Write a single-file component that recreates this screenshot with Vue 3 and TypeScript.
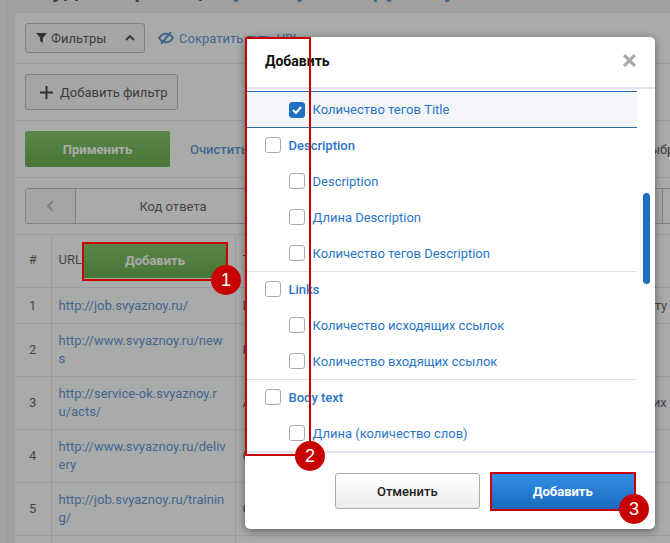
<script setup lang="ts">
interface Row { n: number; url: string; text: string }
interface Item { label: string; checked?: boolean }
interface Group { title: string; items: Item[] }

const rows: Row[] = [
  { n: 1, url: 'http://job.svyaznoy.ru/', text: 'Вакансии в компании Связной – найдите интересную для вас работу' },
  { n: 2, url: 'http://www.svyaznoy.ru/news', text: 'Новости компании Связной' },
  { n: 3, url: 'http://service-ok.svyaznoy.ru/acts/', text: 'Акции сервисных центров Связной для постоянных клиентов, — и их экспертов' },
  { n: 4, url: 'http://www.svyaznoy.ru/delivery', text: 'Способы доставки' },
  { n: 5, url: 'http://job.svyaznoy.ru/training/', text: 'Сотрудникам и обучение' }
]

const groups: Group[] = [
  { title: 'Description', items: [{ label: 'Description' }, { label: 'Длина Description' }, { label: 'Количество тегов Description' }] },
  { title: 'Links', items: [{ label: 'Количество исходящих ссылок' }, { label: 'Количество входящих ссылок' }] },
  { title: 'Body text', items: [{ label: 'Длина (количество слов)' }] }
]
</script>

<template>
  <div class="page">
    <aside class="rail"></aside>
    <main class="content">
      <h1 class="heading">Аудит страниц <a class="heading-link">svyaznoy.ru – группа у</a></h1>
      <section class="card">
        <div class="section">
          <button class="btn filter-btn">
            <svg class="i-funnel" viewBox="0 0 12 11"><path d="M0 0h12L7.500 5.200V11L4.500 9V5.200z" /></svg>
            <span>Фильтры</span>
            <svg class="i-chev" viewBox="0 0 10 6"><path d="M1 5l4-4 4 4" /></svg>
          </button>
          <a class="link short">
            <svg class="i-eye" viewBox="0 0 16 12"><path d="M1 6c2-3 4.200-4.300 7-4.300S13 3 15 6c-2 3-4.200 4.300-7 4.300S3 9 1 6z" /><path d="M13 0L3 12" /></svg>
            Сократить путь URL
          </a>
        </div>
        <div class="section">
          <button class="btn add-filter">
            <svg class="i-plus" viewBox="0 0 13 13"><path d="M6.500 0v13M0 6.500h13" /></svg>
            Добавить фильтр
          </button>
        </div>
        <div class="section">
          <button class="apply">Применить</button>
          <a class="link clear">Очистить</a>
          <span class="pick">Выбрать</span>
        </div>
        <div class="section">
          <div class="tabs">
            <div class="tab prev">
              <svg class="i-left" viewBox="0 0 7 12"><path d="M6 1L1 6l5 5" /></svg>
            </div>
            <div class="tab code">Код ответа</div>
            <div class="tab wide">Контент</div>
            <div class="tab rest"></div>
          </div>
        </div>
        <table class="table">
          <thead>
            <tr>
              <th class="c-n">#</th>
              <th class="c-url">
                <div class="url-head"><span>URL</span><button class="add-col">Добавить</button></div>
              </th>
              <th class="c-text">Title</th>
            </tr>
          </thead>
          <tbody>
            <tr v-for="r in rows" :key="r.n">
              <td class="c-n">{{ r.n }}</td>
              <td class="c-url"><a class="link">{{ r.url }}</a></td>
              <td class="c-text">{{ r.text }}</td>
            </tr>
            <tr><td class="c-n">6</td><td class="c-url"></td><td class="c-text"></td></tr>
          </tbody>
        </table>
      </section>
    </main>

    <div class="overlay"></div>

    <div class="modal">
      <header class="modal-head">
        <span class="modal-title">Добавить</span>
        <svg class="i-close" viewBox="0 0 12 12"><path d="M1 1l10 10M11 1L1 11" /></svg>
      </header>
      <div class="modal-body">
        <div class="rows">
          <label class="row child selected">
            <span class="box on">
              <svg viewBox="0 0 10 8"><path d="M1 4l3 3 5-6" /></svg>
            </span>
            <span class="label">Количество тегов Title</span>
          </label>
          <div v-for="g in groups" :key="g.title" class="group">
            <label class="row">
              <span class="box"></span>
              <span class="label strong">{{ g.title }}</span>
            </label>
            <label v-for="it in g.items" :key="it.label" class="row child">
              <span class="box"></span>
              <span class="label">{{ it.label }}</span>
            </label>
          </div>
        </div>
        <div class="scroll-thumb"></div>
      </div>
      <footer class="modal-foot">
        <button class="btn-cancel">Отменить</button>
        <button class="btn-add">Добавить</button>
      </footer>
    </div>

    <div class="frame f1"></div>
    <div class="frame f2"></div>
    <div class="frame f3"></div>
    <div class="dot d1">1</div>
    <div class="dot d2">2</div>
    <div class="dot d3">3</div>
  </div>
</template>

<style>
html, body { margin: 0; }
</style>

<style scoped>
.page {
  position: relative;
  display: flex;
  width: 670px;
  height: 543px;
  overflow: hidden;
  background: #ebebeb;
  font-family: Roboto, "Liberation Sans", sans-serif;
  font-size: 13px;
  color: #222;
}
.rail { flex: 0 0 5px; background: #f2f2f2; }
.content { flex: 0 0 auto; margin-left: 10px; width: 700px; }
.heading {
  margin: -25px 0 9px 22px;
  height: 29px;
  font-size: 24px;
  line-height: 29px;
  font-weight: 500;
  white-space: nowrap;
  color: #222;
}
.heading-link { color: #2a76c6; }
.card { background: #fdffff; }
.section {
  display: flex;
  align-items: center;
  padding: 10px;
  border-bottom: 1px solid #e0e3f0;
}
.link { color: #2a76c6; }
button { font-family: inherit; font-size: 13px; }
.btn {
  display: flex;
  align-items: center;
  background: #f4f4f4;
  border: 1px solid #ababab;
  border-radius: 3px;
  color: #222;
  padding: 0;
  box-sizing: border-box;
}
.filter-btn { width: 120px; height: 30px; padding-left: 10px; }
.i-funnel { width: 11px; height: 10px; fill: #111; margin-right: 4px; }
.i-chev { width: 10px; height: 6px; margin-left: auto; margin-right: 9px; fill: none; stroke: #111; stroke-width: 1.800; }
.short { display: flex; align-items: center; margin-left: 13px; white-space: nowrap; }
.i-eye { width: 16px; height: 12px; margin-right: 5px; fill: none; stroke: #2a76c6; stroke-width: 2; }
.add-filter { width: 153px; height: 36px; padding-left: 14px; }
.i-plus { width: 13px; height: 13px; fill: none; stroke: #111; stroke-width: 2; margin-right: 7px; }
.apply {
  width: 145px;
  height: 36px;
  border: none;
  border-radius: 2px;
  background: linear-gradient(#5db83c, #3a9616);
  color: #fff;
  font-weight: 700;
}
.clear { margin-left: 20px; font-weight: 500; }
.pick { margin-left: 394px; font-weight: 400; }
.tabs {
  display: flex;
  height: 36px;
  box-sizing: border-box;
  border: 1px solid #ababab;
  border-radius: 3px;
}
.tab { display: flex; align-items: center; justify-content: center; border-right: 1px solid #ababab; box-sizing: border-box; color: #333; }
.prev { width: 50px; background: #f4f4f4; }
.code { width: 195px; }
.wide { width: 392px; }
.rest { width: 30px; }
.i-left { width: 7px; height: 12px; fill: none; stroke: #aaa; stroke-width: 2; }
.table { border-collapse: collapse; table-layout: fixed; width: 685px; }
.table th, .table td {
  border-bottom: 1px solid #e0e3f0;
  border-right: 1px solid #e0e3f0;
  padding: 8px 7px 7px;
  line-height: 18.570px;
  font-weight: 400;
  box-sizing: border-box;
  color: #333;
}
.table tbody tr:first-child td { height: 36px; padding-top: 8px; padding-bottom: 6px; }
.table thead th { height: 52px; padding-top: 0; padding-bottom: 0; }
.c-n { width: 36px; text-align: center; }
.c-url { width: 184px; text-align: left; word-break: break-all; }
.c-text { text-align: left; white-space: nowrap; overflow: hidden; }
.url-head { display: flex; align-items: center; }
.add-col {
  width: 142px;
  height: 35px;
  margin-left: 2px;
  border: none;
  background: linear-gradient(#5db83c, #3a9616);
  color: #fff;
  font-weight: 700;
}
.overlay { position: absolute; inset: 0; background: rgba(85, 85, 85, 0.5); }
.modal {
  position: absolute;
  left: 245px;
  top: 37px;
  width: 410px;
  height: 492px;
  display: flex;
  flex-direction: column;
  background: #fff;
  border-radius: 5px;
  box-shadow: 0 2px 8px rgba(0, 0, 0, 0.45);
  overflow: hidden;
}
.modal-head {
  flex: 0 0 52px;
  box-sizing: border-box;
  display: flex;
  align-items: center;
  justify-content: space-between;
  padding: 0 19px 3px 20px;
  border-bottom: 2px solid #dfe2ef;
}
.modal-title { font-weight: 700; font-size: 14px; color: #111; }
.i-close { width: 13px; height: 13px; fill: none; stroke: #aaa; stroke-width: 3; }
.modal-body { flex: 1; position: relative; overflow: hidden; }
.rows { width: 392px; padding-top: 2px; }
.row { display: flex; align-items: center; height: 36px; padding-left: 20px; box-sizing: border-box; }
.child { padding-left: 44px; }
.selected {
  height: 37px;
  margin-bottom: -1px;
  background: #f3f5f9;
  border-top: 1px solid #2a6cb0;
  border-bottom: 1px solid #2a6cb0;
}
.group { border-bottom: 1px solid #dfe0ec; margin-bottom: -1px; }
.group:last-child { border-bottom: none; }
.box {
  flex: 0 0 16px;
  width: 16px;
  height: 16px;
  box-sizing: border-box;
  border: 1px solid #aaa;
  border-radius: 3px;
  background: #fff;
  margin-right: 7.500px;
  display: flex;
  align-items: center;
  justify-content: center;
}
.box.on { background: #1e6fc0; border-color: #1e6fc0; }
.box svg { width: 10px; height: 8px; fill: none; stroke: #fff; stroke-width: 2; }
.label { color: #2a76c6; }
.strong { font-weight: 500; }
.scroll-thumb {
  position: absolute;
  left: 398px;
  top: 104px;
  width: 7px;
  height: 91px;
  border-radius: 4px;
  background: #1e6fc0;
}
.modal-foot {
  flex: 0 0 78px;
  display: flex;
  align-items: flex-start;
  padding: 20px 20px 0 90px;
  gap: 11px;
  border-top: 2px solid #dfe2ef;
  box-sizing: border-box;
}
.btn-cancel, .btn-add { width: 145px; height: 36px; border-radius: 3px; font-weight: 500; }
.btn-cancel { background: linear-gradient(#fff, #ececec); border: 1px solid #aaa; color: #222; }
.btn-add { background: linear-gradient(#3490e8, #1a69bd); border: none; color: #fff; font-weight: 700; }
.frame { position: absolute; border: 2px solid #c80000; box-sizing: border-box; }
.f1 { left: 82px; top: 242px; width: 146px; height: 39px; }
.f2 { left: 245px; top: 37px; width: 66px; height: 419px; }
.f3 { left: 490px; top: 472px; width: 146px; height: 39px; }
.dot {
  position: absolute;
  width: 30px;
  height: 30px;
  border-radius: 50%;
  background: #c80000;
  color: #fff;
  font-family: "Liberation Sans", Roboto, sans-serif;
  font-size: 18px;
  line-height: 30px;
  text-align: center;
}
.d1 { left: 211px; top: 265px; }
.d2 { left: 295px; top: 441px; }
.d3 { left: 619px; top: 494px; }
</style>
